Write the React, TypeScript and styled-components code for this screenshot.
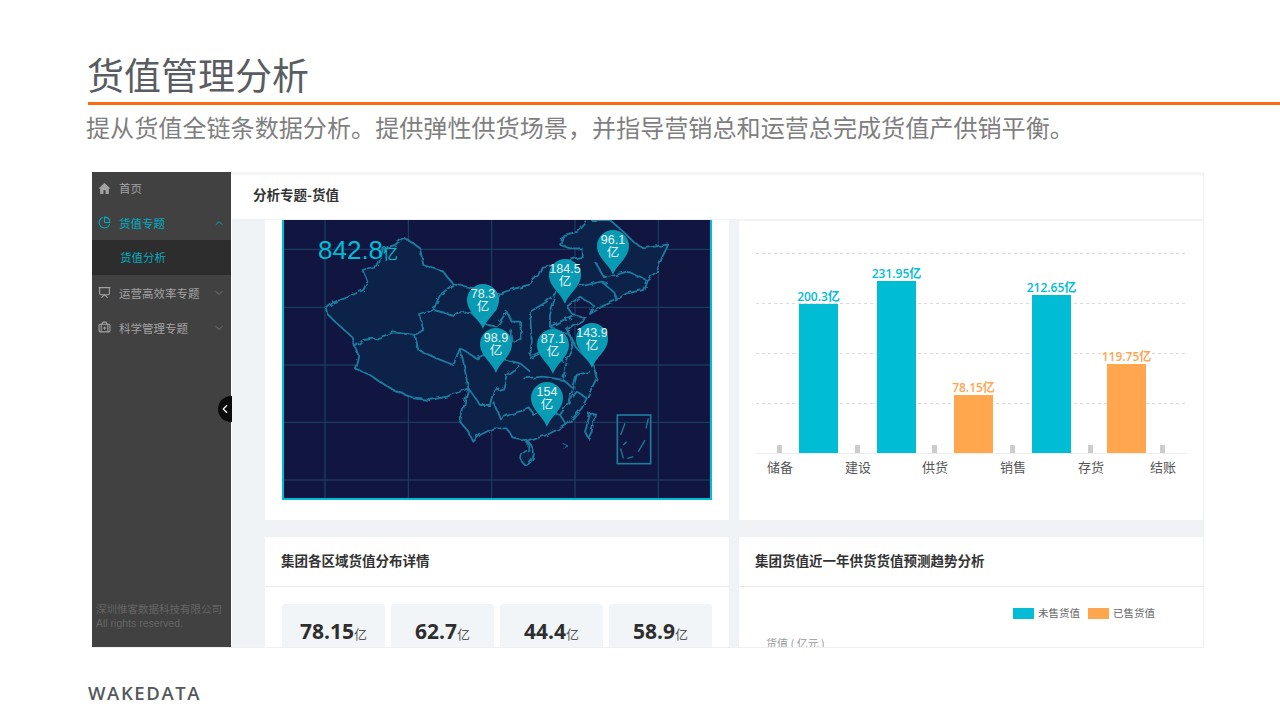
import React from 'react';
import styled, { createGlobalStyle } from 'styled-components';
import {
  BriefcaseMedical,
  ChevronDown,
  ChevronLeft,
  ChevronUp,
  PieChart,
  Presentation,
} from 'lucide-react';

const CJK = `"Noto Sans CJK SC", "Liberation Sans", sans-serif`;

const GlobalStyle = createGlobalStyle`
  html, body {
    margin: 0;
    background: #fff;
    font-family: ${CJK};
  }
  * { box-sizing: border-box; }
`;

const Slide = styled.div`
  width: 1280px;
  height: 720px;
  overflow: hidden;
  background: #fff;
  padding-top: 51px;
`;

const Title = styled.h1`
  margin: 0 0 0 87px;
  font-size: 37px;
  line-height: 46px;
  font-weight: 400;
  color: #595c60;
`;

const Rule = styled.div`
  height: 3px;
  margin: 5px 0 0 88px;
  background: #ff6a10;
`;

const Subtitle = styled.p`
  margin: 4px 0 0 86px;
  font-size: 24.1px;
  line-height: 36px;
  font-weight: 400;
  color: #7f7f7f;
  white-space: nowrap;
`;

const Frame = styled.div`
  position: relative;
  display: flex;
  width: 1112px;
  height: 476px;
  margin: 27px 0 0 92px;
  overflow: hidden;
  border-right: 1px solid #eef0f3;
  border-bottom: 1px solid #eef0f3;
`;

const Sidebar = styled.aside`
  display: flex;
  flex-direction: column;
  flex: 0 0 139px;
  background: #414141;
  margin-right: 1px;
`;

const NavItem = styled.div<{ $active?: boolean }>`
  display: flex;
  align-items: center;
  height: 35px;
  padding: 0 6px;
  font-size: 11.5px;
  color: ${({ $active }) => ($active ? '#00abc1' : '#a3a3a3')};

  &:first-child {
    height: 32px;
    margin-bottom: 1px;
  }
  svg { flex: none; }
`;

const NavLabel = styled.span`
  flex: 1;
  margin-left: 8px;
`;

const Caret = styled.span<{ $active?: boolean }>`
  display: flex;
  color: ${({ $active }) => ($active ? '#00abc1' : '#777')};
`;

const SubItem = styled.div`
  height: 35px;
  padding-left: 28px;
  background: #2d2d2d;
  font-size: 11.5px;
  line-height: 35px;
  color: #00abc1;
`;

const Copyright = styled.div`
  margin-top: auto;
  padding: 0 0 17px 4px;
  font-size: 10.5px;
  line-height: 14px;
  color: #656565;
  font-family: "Liberation Sans", "Noto Sans CJK SC", sans-serif;
`;

const Collapse = styled.div`
  position: absolute;
  left: 126px;
  top: 224px;
  display: flex;
  align-items: center;
  justify-content: center;
  width: 14px;
  height: 26px;
  border-radius: 13px 0 0 13px;
  background: #0b0b0b;
  color: #fff;
`;

const Main = styled.main`
  flex: 1;
  min-width: 0;
  display: flex;
  flex-direction: column;
  background: #f0f3f6;
`;

const TopBar = styled.header`
  flex: 0 0 48px;
  padding-left: 21px;
  background: #fff;
  border-top: 3px solid #f5f5f5;
  border-bottom: 1px solid #f0f1f3;
  font-size: 13.5px;
  line-height: 39px;
  font-weight: 700;
  color: #333;
`;

const Board = styled.div`
  display: grid;
  grid-template-columns: 464px 465px;
  grid-auto-rows: min-content;
  column-gap: 10px;
  row-gap: 17px;
  padding-left: 33px;
`;

const Card = styled.section`
  background: #fff;
`;

const MapCard = styled(Card)`
  height: 300px;
  padding: 0 17px 20px;
`;

const ChartCard = styled(Card)`
  height: 300px;
  border-top: 1px solid #f3f4f6;
`;

const MapPanel = styled.div`
  position: relative;
  width: 430px;
  height: 280px;
  background: #10163f;
  border: solid #00bcd4;
  border-width: 0 2px 2px;
  overflow: hidden;
`;

const MapDrawing = styled.svg`
  display: block;
  width: 100%;
  height: 100%;
`;

const Total = styled.div`
  position: absolute;
  left: 34px;
  top: 14px;
  font-family: "Liberation Sans", sans-serif;
  font-size: 26px;
  line-height: 32px;
  color: #00bcd4;

  small {
    font-family: ${CJK};
    font-size: 15px;
  }
`;

const PinBox = styled.div<{ $x: number; $y: number }>`
  position: absolute;
  left: ${({ $x }) => $x - 284 - 17}px;
  top: ${({ $y }) => $y - 220}px;
  width: 34px;
  height: 46px;
`;

const PinText = styled.div`
  position: absolute;
  inset: 5px 0 auto;
  text-align: center;
  font-family: "Liberation Sans", "Noto Sans CJK SC", sans-serif;
  font-size: 12.5px;
  line-height: 13px;
  color: #e8f6f9;
`;

const CardHead = styled.h3`
  margin: 0;
  height: 50px;
  padding-left: 16px;
  border-bottom: 1px solid #e9ebef;
  font-size: 13.5px;
  line-height: 47px;
  font-weight: 700;
  color: #333;
`;

const Tiles = styled.div`
  display: grid;
  grid-template-columns: repeat(4, 103px);
  gap: 6px;
  padding: 17px 0 0 17px;
`;

const Tile = styled.div`
  height: 80px;
  padding-top: 11px;
  border-radius: 3px;
  background: #f2f5f8;
  text-align: center;
  font-family: "Open Sans", "Noto Sans CJK SC", sans-serif;
  font-size: 21px;
  line-height: 32px;
  font-weight: 700;
  color: #2e2e2e;

  small {
    font-family: ${CJK};
    font-size: 13px;
    font-weight: 400;
    color: #555;
  }
`;

const Legend = styled.div`
  display: flex;
  justify-content: flex-end;
  gap: 8px;
  padding: 19px 49px 0 0;
  font-size: 10.5px;
  line-height: 14px;
  color: #666;
`;

const LegendItem = styled.span`
  display: flex;
  align-items: center;
  gap: 4px;
`;

const Swatch = styled.i<{ $color: string }>`
  width: 21px;
  height: 11px;
  background: ${({ $color }) => $color};
`;

const AxisName = styled.div`
  padding: 15px 0 0 27px;
  font-size: 11px;
  line-height: 16px;
  color: #999;
`;

const Wordmark = styled.div`
  margin: 33px 0 0 88px;
  font-family: "Open Sans", "Liberation Sans", sans-serif;
  font-size: 18.5px;
  line-height: 24px;
  font-weight: 600;
  letter-spacing: 1.6px;
  color: #55585c;
`;

const CYAN = '#00bcd4';
const ORANGE = '#ffa64f';

const pins = [
  { x: 613, y: 229, value: '96.1' },
  { x: 565, y: 258, value: '184.5' },
  { x: 483, y: 283, value: '78.3' },
  { x: 496, y: 327, value: '98.9' },
  { x: 553, y: 328, value: '87.1' },
  { x: 592, y: 322, value: '143.9' },
  { x: 547, y: 381, value: '154' },
];

const bars = [
  { x: 799, w: 39, top: 304, label: '200.3亿', color: CYAN },
  { x: 877, w: 39, top: 281, label: '231.95亿', color: CYAN },
  { x: 954, w: 39, top: 395, label: '78.15亿', color: ORANGE },
  { x: 1032, w: 39, top: 295, label: '212.65亿', color: CYAN },
  { x: 1107, w: 39, top: 364, label: '119.75亿', color: ORANGE },
];

const categories = [
  { x: 780, label: '储备' },
  { x: 858, label: '建设' },
  { x: 935, label: '供货' },
  { x: 1013, label: '销售' },
  { x: 1091, label: '存货' },
  { x: 1163, label: '结账' },
];

const stats = ['78.15', '62.7', '44.4', '58.9'];

const OUTLINE =
  'M140 280L160 262L200 248L250 225L262 200L248 165L295 150L310 100L345 90L370 68L400 85L420 100L430 150L490 170L520 208L560 215L600 225L660 235L700 222L745 210L775 180L785 155L830 150L870 135L905 125L905 100L870 100L840 90L850 60L895 50L925 15L990 15L1030 50L1060 80L1090 100L1165 88L1145 130L1130 170L1100 195L1090 225L1040 235L1010 255L965 275L930 297L940 270L900 245L880 260L860 275L880 300L920 310L880 330L860 345L890 400L940 450L950 490L930 530L905 580L860 630L800 660L745 680L700 670L680 640L640 640L600 660L580 680L565 650L540 620L565 520L500 545L450 555L400 550L330 520L270 480L225 460L235 420L225 395L215 365L165 320L145 300Z';

const BORDERS = [
  'M520 208L480 240L460 285L420 300L430 345L405 360L340 352L290 370L250 375L225 395',
  'M460 285L520 300L570 290L600 320L625 330L650 335L680 290L695 320L720 320L725 375L695 380L690 340',
  'M405 360L415 405L470 430L520 450L540 400L590 430L610 420L660 430L720 445L750 470',
  'M540 400L550 440L565 520',
  'M565 520L600 570L630 570L640 530L670 520L680 480L720 450',
  'M640 560L660 610L700 595L750 580L760 600L790 580L840 600L860 630',
  'M730 490L790 485L850 495L880 520L860 570L840 600',
  'M880 520L890 480L930 470M860 570L890 530L920 550',
  'M750 290L755 380L750 430L770 420L810 400L850 440',
  'M830 230L810 300L810 335L870 360L880 400L860 440L850 490',
  'M810 335L860 310L880 300',
  'M965 200L1000 230L1010 255M945 140L975 190L1040 170L1100 195M900 215L965 200L985 205',
  'M660 235L640 290L600 320M750 290L800 260L830 230',
];

const ChinaMap = () => (
  <MapDrawing viewBox="12 15 1278 834" preserveAspectRatio="none">
    <defs>
      {/* roughens the hand-traced borders so they read as province lines */}
      <filter id="rough" x="-5%" y="-5%" width="110%" height="110%">
        <feTurbulence type="fractalNoise" baseFrequency="0.045" numOctaves="2" seed="4" />
        <feDisplacementMap in="SourceGraphic" scale="16" />
      </filter>
    </defs>
    <g stroke="#1a4668" strokeWidth="3">
      {[135, 385, 635, 885, 1135].map((x) => (
        <line key={x} x1={x} y1="15" x2={x} y2="849" />
      ))}
      {[103, 277, 450, 622, 795].map((y) => (
        <line key={y} x1="12" y1={y} x2="1290" y2={y} />
      ))}
    </g>
    <g fill="none" stroke="#1d7ba0" strokeWidth="5.5" strokeLinejoin="round" filter="url(#rough)">
      <path d={OUTLINE} fill="#0f2349" />
      {BORDERS.map((d) => (
        <path key={d} d={d} />
      ))}
      <path d="M745 680C770 705 765 735 740 750C720 745 715 715 745 705Z" fill="#0f2349" />
      <path d="M915 650L930 597L945 595L935 650L925 670Z" fill="#0f2349" />
      <path d="M848 685L864 693L850 700" strokeWidth="3" />
    </g>
    <g fill="none" stroke="#1d7ba0" strokeWidth="5">
      <rect x="1012" y="600" width="100" height="146" />
      <path d="M1035 625L1022 660M1022 700L1030 730M1042 730L1060 725M1075 710L1095 675M1098 640L1105 610M1040 680L1030 690" strokeWidth="4" />
    </g>
  </MapDrawing>
);

const Pin = ({ x, y, value }: { x: number; y: number; value: string }) => (
  <PinBox $x={x} $y={y}>
    <svg width="34" height="46" viewBox="0 0 34 46">
      <path d="M17 46C14 36 1 29 1 17A16 16 0 0 1 33 17C33 29 20 36 17 46Z" fill="#0aa2bb" fillOpacity="0.95" />
    </svg>
    <PinText>
      {value}
      <br />
      亿
    </PinText>
  </PinBox>
);

// page coordinates are kept in the data, so shift by the card's origin
const BarChart = () => (
  <svg width="465" height="290" viewBox="739 221 465 290">
    {[253.5, 303.5, 353.5, 403.5].map((y) => (
      <line key={y} x1="756" y1={y} x2="1187" y2={y} stroke="#dadada" strokeDasharray="3 3" />
    ))}
    <line x1="756" y1="453.5" x2="1187" y2="453.5" stroke="#eeeeee" />
    {categories.map((c) => (
      <rect key={c.label} x={c.x - 3} y="445" width="5" height="8" fill="#cccccc" />
    ))}
    {bars.map((b) => (
      <g key={b.label}>
        <rect x={b.x} y={b.top} width={b.w} height={453 - b.top} fill={b.color} />
        <text
          x={b.x + b.w / 2}
          y={b.top - 3}
          textAnchor="middle"
          fontSize="12"
          fontWeight="600"
          fill={b.color}
          fontFamily={`"Open Sans", "Noto Sans CJK SC", sans-serif`}
        >
          {b.label}
        </text>
      </g>
    ))}
    {categories.map((c) => (
      <text key={c.label} x={c.x} y="472" textAnchor="middle" fontSize="13" fill="#555">
        {c.label}
      </text>
    ))}
  </svg>
);

const HomeIcon = () => (
  <svg width="13" height="13" viewBox="0 0 24 24" fill="#a3a3a3">
    <path d="M12 2L1 12h3v10h6v-7h4v7h6V12h3z" />
  </svg>
);

export default function App() {
  return (
    <Slide>
      <GlobalStyle />
      <Title>货值管理分析</Title>
      <Rule />
      <Subtitle>提从货值全链条数据分析。提供弹性供货场景，并指导营销总和运营总完成货值产供销平衡。</Subtitle>
      <Frame>
        <Sidebar>
          <NavItem>
            <HomeIcon />
            <NavLabel>首页</NavLabel>
          </NavItem>
          <NavItem $active>
            <PieChart size={13} />
            <NavLabel>货值专题</NavLabel>
            <Caret $active>
              <ChevronUp size={12} />
            </Caret>
          </NavItem>
          <SubItem>货值分析</SubItem>
          <NavItem>
            <Presentation size={13} />
            <NavLabel>运营高效率专题</NavLabel>
            <Caret>
              <ChevronDown size={12} />
            </Caret>
          </NavItem>
          <NavItem>
            <BriefcaseMedical size={13} />
            <NavLabel>科学管理专题</NavLabel>
            <Caret>
              <ChevronDown size={12} />
            </Caret>
          </NavItem>
          <Copyright>
            深圳惟客数据科技有限公司
            <br />
            All rights reserved.
          </Copyright>
        </Sidebar>
        <Collapse>
          <ChevronLeft size={14} />
        </Collapse>
        <Main>
          <TopBar>分析专题-货值</TopBar>
          <Board>
            <MapCard>
              <MapPanel>
                <ChinaMap />
                <Total>
                  842.8<small>亿</small>
                </Total>
                {pins.map((p) => (
                  <Pin key={p.value} x={p.x} y={p.y} value={p.value} />
                ))}
              </MapPanel>
            </MapCard>
            <ChartCard>
              <BarChart />
            </ChartCard>
            <Card>
              <CardHead>集团各区域货值分布详情</CardHead>
              <Tiles>
                {stats.map((s) => (
                  <Tile key={s}>
                    {s}
                    <small>亿</small>
                  </Tile>
                ))}
              </Tiles>
            </Card>
            <Card>
              <CardHead>集团货值近一年供货货值预测趋势分析</CardHead>
              <Legend>
                <LegendItem>
                  <Swatch $color={CYAN} />
                  未售货值
                </LegendItem>
                <LegendItem>
                  <Swatch $color={ORANGE} />
                  已售货值
                </LegendItem>
              </Legend>
              <AxisName>货值 ( 亿元 )</AxisName>
            </Card>
          </Board>
        </Main>
      </Frame>
      <Wordmark>WAKEDATA</Wordmark>
    </Slide>
  );
}
